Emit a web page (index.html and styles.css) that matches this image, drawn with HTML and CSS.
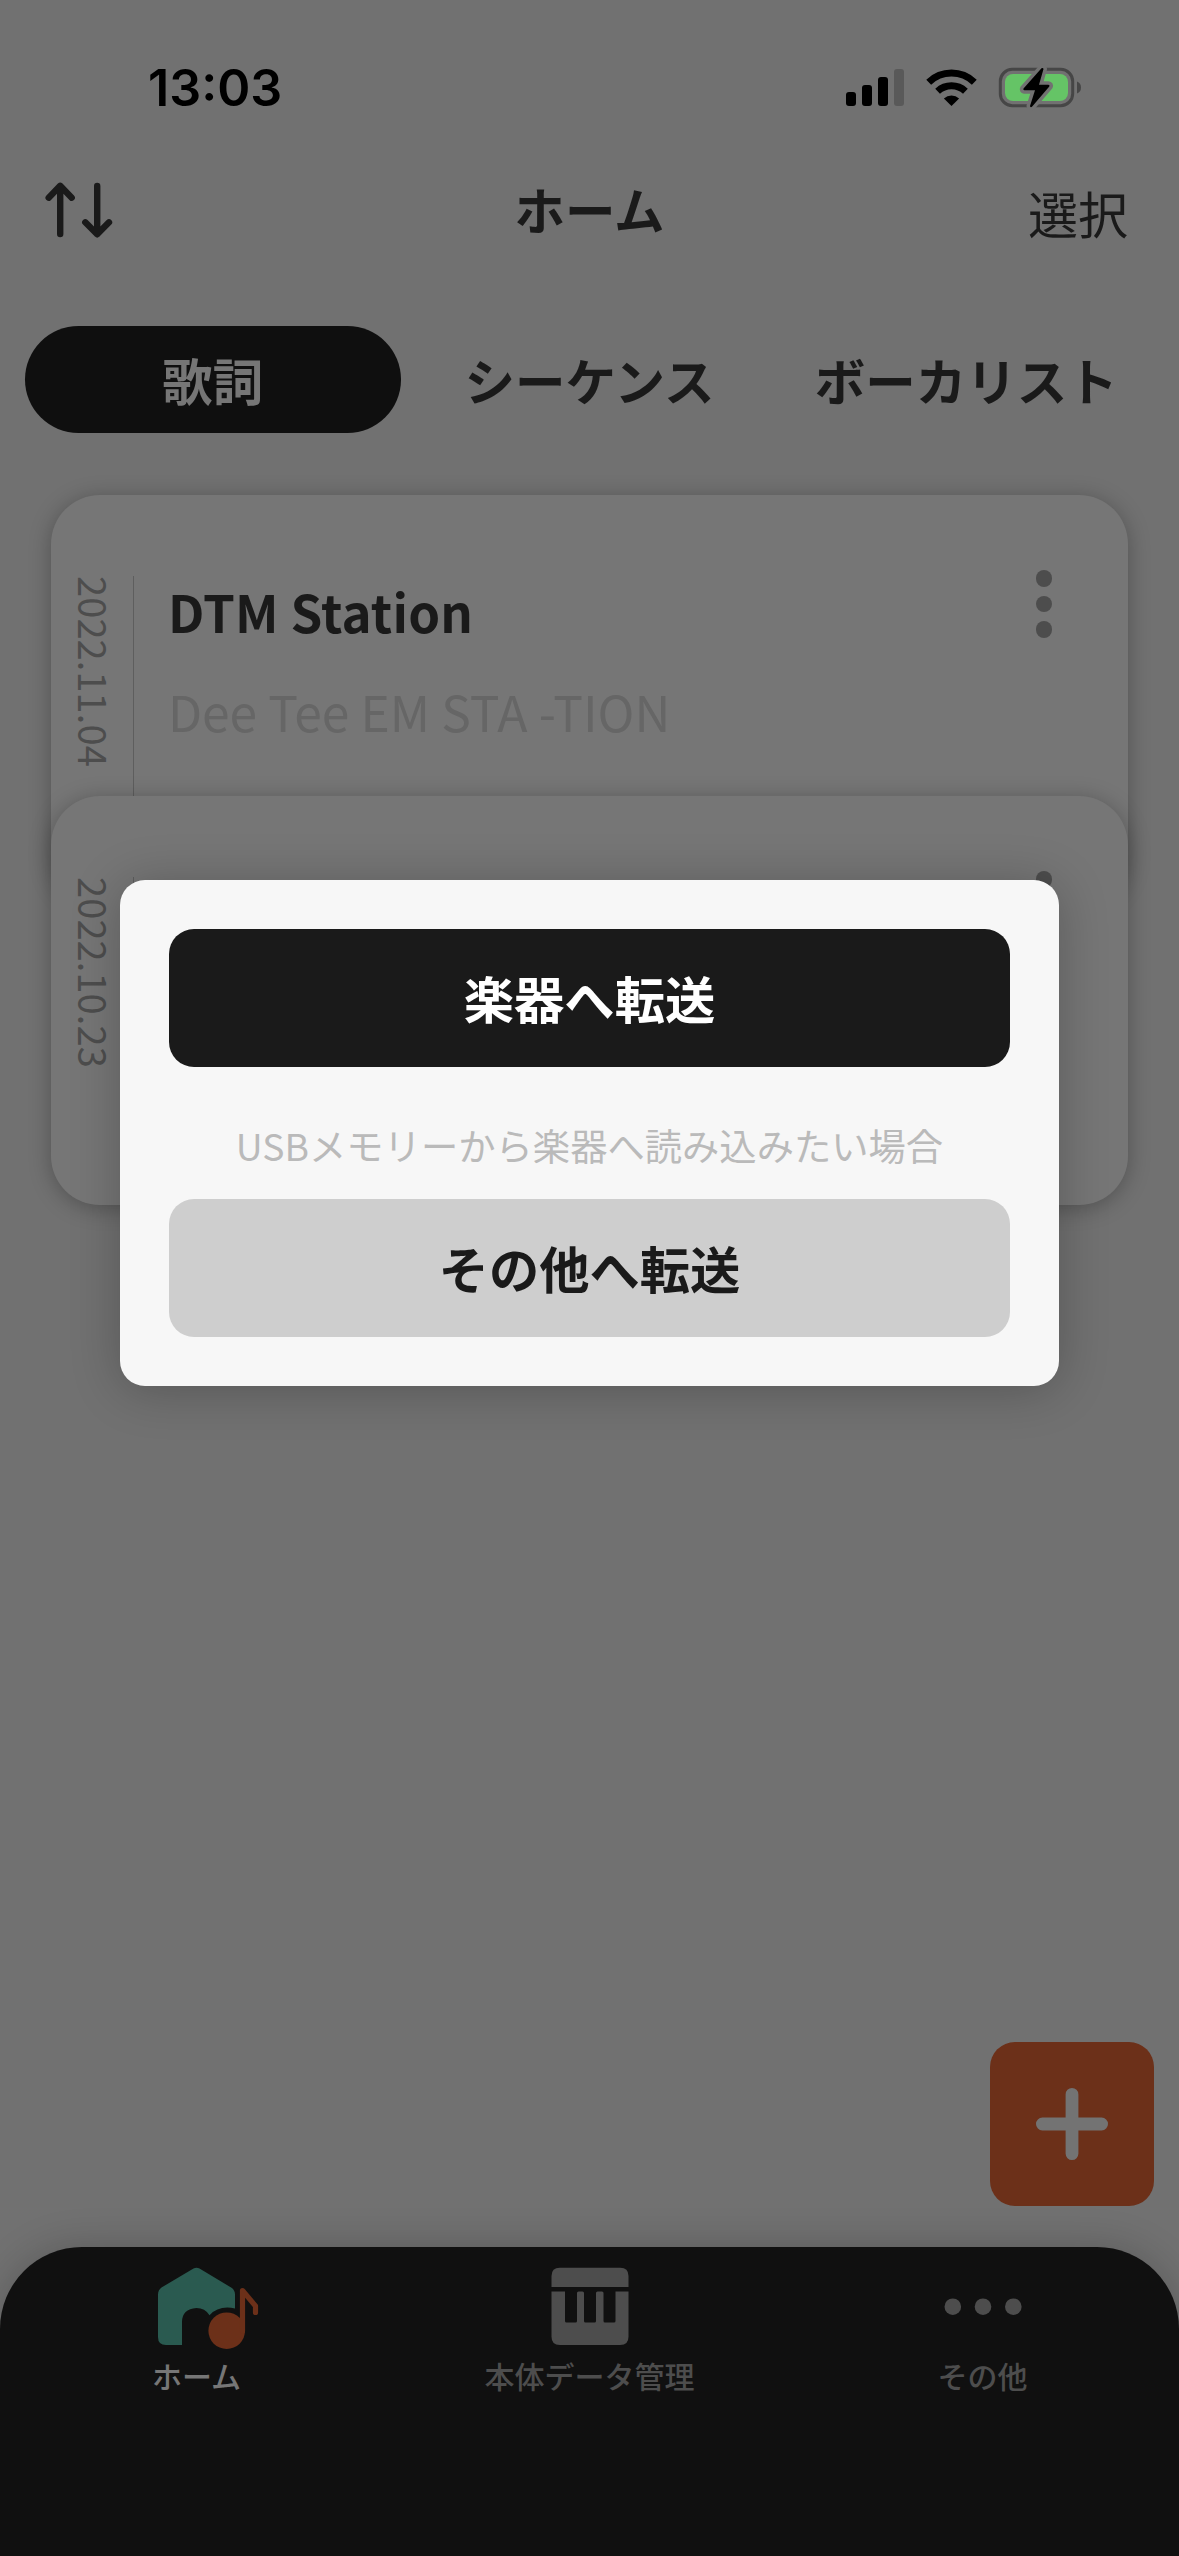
FILE: index.html
```html
<!DOCTYPE html>
<html lang="ja">
<head>
<meta charset="utf-8">
<title>ホーム</title>
<link rel="stylesheet" href="styles.css">
</head>
<body>
<div class="app">
  <div class="status">
    <span class="time">13:03</span>
    <svg class="status-icons" viewBox="840 60 250 54" width="250" height="54">
      <g fill="#000">
        <rect x="846" y="92" width="10" height="14" rx="3"/>
        <rect x="862" y="85" width="10" height="21" rx="3"/>
        <rect x="878" y="77" width="10" height="29" rx="3"/>
        <rect x="894" y="69" width="10" height="37" rx="3" fill="#595959"/>
        <path d="M951.5 106l-7.6-7.6a11.5 11.5 0 0 1 15.2 0z"/>
      </g>
      <g fill="none" stroke="#000" stroke-width="7">
        <path d="M937.6 91.3a20.5 20.5 0 0 1 27.8 0"/>
        <path d="M928.7 82.2a33 33 0 0 1 45.6 0"/>
      </g>
      <rect x="1000.3" y="69.3" width="72.4" height="36.4" rx="12" fill="none" stroke="#464646" stroke-width="3"/>
      <path d="M1077 81.5q4 1.500 4 6t-4 6z" fill="#464646"/>
      <rect x="1005" y="74" width="63" height="27" rx="8" fill="#65c466"/>
      <path d="M1041.500 68.2L1023.500 88.500q-.8 1.500 1 1.800h10.500L1030 106q.5 2 2.200.6L1049.300 86.500q.8-1.700-1-1.800H1039L1043.500 69q-.3-1.500-2-.8z" fill="#000" stroke="#717171" stroke-width="7" paint-order="stroke" stroke-linejoin="round"/>
    </svg>
  </div>

  <header class="header">
    <svg class="sort" viewBox="40 178 80 64" width="80" height="64" fill="none" stroke="#1a1a1a" stroke-width="6.400" stroke-linecap="round" stroke-linejoin="round">
      <path d="M60.200 234V186M48.700 197.700L60.200 185.800L71.700 197.700"/>
      <path d="M97.200 186V234M85.300 222.300L97.200 234.300L109 222.300"/>
    </svg>
    <h1 class="title">ホーム</h1>
    <span class="select">選択</span>
  </header>

  <nav class="tabs">
    <span class="tab tab-active">歌詞</span>
    <span class="tab">シーケンス</span>
    <span class="tab">ボーカリスト</span>
  </nav>

  <main class="list">
    <article class="card">
      <time class="date">2022.11.04</time>
      <div class="body">
        <h2 class="name">DTM Station</h2>
        <p class="lyric">Dee Tee EM STA -TION</p>
      </div>
      <div class="more"><i></i><i></i><i></i></div>
    </article>
    <article class="card">
      <time class="date">2022.10.23</time>
      <div class="body"></div>
      <div class="more"><i></i><i></i><i></i></div>
    </article>
  </main>

  <footer class="bottom">
    <div class="item item-active">
      <svg viewBox="150 2262 120 90" width="120" height="90">
        <path d="M193.500 2268.400q3-1.400 6 0L231.500 2287.800q3.500 2.300 3.500 7V2308.500Q219 2305 209.500 2315.200Q205 2308 196.500 2308Q182 2309 182 2322V2345H166q-8 0-8-8V2294.500q0-4.500 3.500-7z" fill="#2a5a50"/>
        <circle cx="226.700" cy="2330.700" r="18.300" fill="#6c3019"/>
        <path d="M242.500 2331V2290.500L255.500 2306V2312.500" fill="none" stroke="#6c3019" stroke-width="5.200" stroke-linecap="round" stroke-linejoin="round"/>
      </svg>
      <span>ホーム</span>
    </div>
    <div class="item">
      <svg viewBox="529.500 2262 120 90" width="120" height="90" fill="#4d4d4d">
        <path d="M551 2287V2276q0-8.300 8.300-8.300H619.700q8.300 0 8.300 8.300V2287z"/>
        <path d="M551 2291.500H564.500V2321q0 1.500 1.500 1.500H575q1.500 0 1.500-1.500V2293q0-1.500 1.500-1.500H582q1.500 0 1.500 1.500V2321q0 1.500 1.500 1.500H594q1.500 0 1.500-1.500V2293q0-1.500 1.500-1.500H601.500q1.500 0 1.500 1.500V2321q0 1.500 1.500 1.500H613.500q1.500 0 1.500-1.500V2291.500H628V2336.700q0 8.300-8.300 8.300H559.300q-8.300 0-8.300-8.300z"/>
      </svg>
      <span>本体データ管理</span>
    </div>
    <div class="item">
      <svg viewBox="922.500 2262 120 90" width="120" height="90" fill="#4d4d4d">
        <circle cx="952.300" cy="2306.700" r="8.300"/><circle cx="982.500" cy="2306.700" r="8.300"/><circle cx="1012.800" cy="2306.700" r="8.300"/>
      </svg>
      <span>その他</span>
    </div>
  </footer>

  <div class="fab">
    <svg viewBox="0 0 72 72" width="72" height="72" stroke="#737373" stroke-width="12.800" stroke-linecap="round"><path d="M36 6.400V65.600M6.400 36H65.600"/></svg>
  </div>

  <section class="dialog">
    <button class="btn primary">楽器へ転送</button>
    <p class="hint">USBメモリーから楽器へ読み込みたい場合</p>
    <button class="btn">その他へ転送</button>
  </section>
</div>
</body>
</html>
```
FILE: styles.css
```css
* { box-sizing: border-box; margin: 0; padding: 0; }

body {
  width: 1179px;
  height: 2556px;
  overflow: hidden;
  background: #717171;
  color: #1a1a1a;
  font-family: "Noto Sans CJK JP", sans-serif;
}

.app {
  position: relative;
  display: flex;
  flex-direction: column;
  width: 1179px;
  height: 2556px;
}

.status {
  display: flex;
  justify-content: space-between;
  height: 150px;
  padding: 60px 89px 0 148px;
}
.time {
  color: #000;
  font: 600 50.200px/56px Inter, sans-serif;
}

.header {
  display: grid;
  grid-template-columns: 1fr auto 1fr;
  align-items: center;
  height: 120px;
  padding: 0 51px 0 40px;
}
.title {
  font-size: 50.500px;
  line-height: 60px;
  padding: 0 0 4px 11px;
}
.select {
  justify-self: end;
  font-size: 50px;
  line-height: 60px;
  padding-top: 4px;
}

.tabs {
  display: grid;
  grid-template-columns: repeat(3, 1fr);
  height: 107px;
  margin-top: 56px;
  padding: 0 24.500px;
}
.tab {
  display: flex;
  align-items: center;
  justify-content: center;
  padding-bottom: 2px;
  border-radius: 54px;
  font-size: 50.500px;
  font-weight: 700;
}
.tab-active { background: #0f0f0f; color: #767676; }

.list {
  flex: 1;
  padding: 61.500px 51.400px 0;
}
.card {
  display: flex;
  height: 409px;
  border-radius: 49px;
  background: #767676;
  box-shadow: 0 3px 22px rgba(0, 0, 0, .28);
  isolation: isolate;
}
.card + .card { margin-top: -108px; }
.date {
  width: 82.500px;
  height: 328px;
  margin-top: 81px;
  border-right: 1px solid #5e5e5e;
  color: #4d4d4d;
  font-size: 38px;
  letter-spacing: .1px;
  line-height: 77px;
  writing-mode: vertical-rl;
}
.body {
  flex: 1;
  padding: 80px 0 0 34px;
}
.name {
  font-size: 51px;
  line-height: 72px;
  letter-spacing: .2px;
}
.lyric {
  margin-top: 27px;
  color: #666;
  font-size: 49.700px;
  line-height: 72px;
}
.more {
  display: flex;
  flex-direction: column;
  gap: 9px;
  padding: 75.500px 75.600px 0 0;
}
.more i {
  width: 16.500px;
  height: 16.500px;
  border-radius: 50%;
  background: #4d4d4d;
}

.bottom {
  display: grid;
  grid-template-columns: repeat(3, 1fr);
  height: 309.500px;
  border-radius: 82px 82px 0 0;
  background: #101010;
  box-shadow: 0 0 40px rgba(0, 0, 0, .2);
}
.item {
  display: flex;
  flex-direction: column;
  align-items: center;
  padding-top: 15.500px;
  color: #4d4d4d;
  font-size: 30px;
  line-height: 44px;
}
.item svg { display: block; }
.item:first-child svg { margin-left: 27px; }
.item span { margin-top: 1px; font-weight: 500; }
.item-active { color: #767676; }

.fab {
  position: absolute;
  left: 990.400px;
  top: 2041.500px;
  display: grid;
  place-items: center;
  width: 164px;
  height: 164px;
  border-radius: 25px;
  background: #6c3019;
}

.dialog {
  position: absolute;
  left: 120px;
  top: 880px;
  display: flex;
  flex-direction: column;
  width: 939px;
  height: 506px;
  padding: 49px;
  border-radius: 25px;
  background: #f7f7f7;
  box-shadow: 0 4px 50px rgba(0, 0, 0, .24);
}
.btn {
  height: 138px;
  padding-bottom: 2px;
  border: 0;
  border-radius: 25px;
  background: #cecece;
  color: #1a1a1a;
  font: 700 50.300px/72px "Noto Sans CJK JP", sans-serif;
}
.primary { background: #1a1a1a; color: #fff; }
.hint {
  margin: 52px 0 27px;
  color: #bababa;
  font-size: 37.300px;
  line-height: 53px;
  text-align: center;
}
```
